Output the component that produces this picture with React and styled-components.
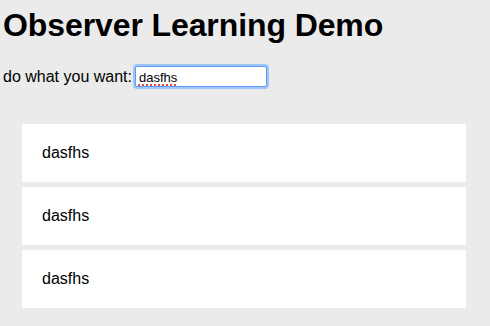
import React, { useState } from 'react';
import styled, { createGlobalStyle } from 'styled-components';

const GlobalStyle = createGlobalStyle`
  html, body {
    margin: 0;
    padding: 0;
    background: #ebebeb;
  }
  body {
    font-family: "Liberation Sans", Arial, sans-serif;
    color: #000;
  }
`;

const Page = styled.div`
  padding: 0 3px;
  height: 326px;
  box-sizing: border-box;
`;

const Title = styled.h1`
  margin: 0;
  padding-top: 7px;
  font-size: 32px;
  font-weight: bold;
  line-height: 37px;
  letter-spacing: -0.1px;
`;

const Form = styled.div`
  display: flex;
  align-items: center;
  gap: 3px;
  margin-top: 22px;
  font-size: 16px;
`;

const FieldWrap = styled.div`
  position: relative;
  display: flex;
`;

const Field = styled.input`
  width: 132px;
  height: 21px;
  box-sizing: border-box;
  padding: 1px 3px 0;
  font-family: "Liberation Sans", Arial, sans-serif;
  font-size: 13px;
  color: #000;
  background: #fff;
  border: 1px solid #5d9cf0;
  border-radius: 2px;
  box-shadow: 0 0 0 2px #9fc6fa;
  outline: none;
`;

const Squiggle = styled.span`
  position: absolute;
  left: 4px;
  top: 3px;
  font-family: "Liberation Sans", Arial, sans-serif;
  font-size: 13px;
  line-height: 15px;
  color: transparent;
  text-decoration: underline dotted #e04848;
  text-decoration-thickness: 1.5px;
  text-underline-offset: 2.5px;
  pointer-events: none;
  white-space: pre;
`;

const List = styled.div`
  display: flex;
  flex-direction: column;
  gap: 5px;
  margin: 37px 21px 0 19px;
`;

const Card = styled.div`
  background: #fff;
  height: 58px;
  display: flex;
  align-items: center;
  padding-left: 20px;
  font-size: 16px;
  border-radius: 1px;
`;

export default function App() {
  const [value, setValue] = useState('dasfhs');
  const items = [value, value, value];

  return (
    <Page>
      <GlobalStyle />
      <Title>Observer Learning Demo</Title>
      <Form>
        <label>do what you want:</label>
        <FieldWrap>
          <Field value={value} onChange={(e) => setValue(e.target.value)} spellCheck={false} />
          <Squiggle>{value}</Squiggle>
        </FieldWrap>
      </Form>
      <List>
        {items.map((item, i) => (
          <Card key={i}>{item}</Card>
        ))}
      </List>
    </Page>
  );
}
